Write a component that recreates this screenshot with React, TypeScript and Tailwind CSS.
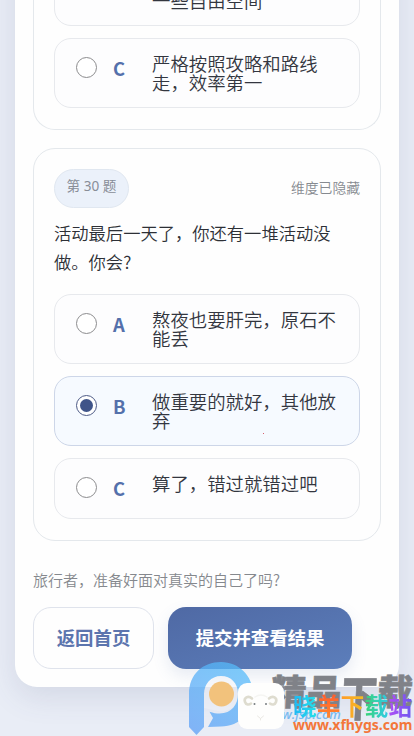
import React from 'react'
import clsx from 'clsx'

interface OptionProps {
  letter: string
  lines: string[]
  selected?: boolean
  short?: boolean
}

const Option: React.FC<OptionProps> = ({ letter, lines, selected, short }) => (
  <label
    className={clsx(
      'flex items-start rounded-[17px] border pl-[21px] pt-[16px]',
      short ? 'h-[61px]' : 'h-[70px]',
      selected ? 'border-[#cdd6e8] bg-[#f6faff]' : 'border-[#e7e9ed] bg-[#fdfdfe]'
    )}
  >
    <span
      className={clsx(
        'mt-[2px] flex size-[21px] shrink-0 items-center justify-center rounded-full border-[1.5px] bg-white',
        selected ? 'border-[#4d5a86]' : 'border-[#8c8c8e]'
      )}
    >
      {selected && <span className="size-[13px] rounded-full bg-[#3f5489]" />}
    </span>
    <span className="-mt-[1.5px] ml-[16px] w-[39px] shrink-0 text-[18.4px] font-bold leading-[28px] text-[#5470ab]">
      {letter}
    </span>
    <span className="-mt-px text-[18.4px] font-[350] leading-[18.5px] text-[#33363f]">
      {lines.map((line, i) => (
        <span key={i} className="block h-[18.5px] whitespace-nowrap">
          {line}
        </span>
      ))}
    </span>
  </label>
)

const SiteLogo = () => (
  <svg className="absolute left-[186px] top-[658px]" width="104" height="78" viewBox="0 0 104 78">
    <defs>
      <linearGradient id="logo-arch" x1="0" y1="1" x2="0.6" y2="0">
        <stop offset="0" stopColor="#5c9df6" />
        <stop offset="1" stopColor="#56bbfa" />
      </linearGradient>
    </defs>
    <path d="M18 50V36A17.5 17.5 0 1 1 31 53Z" fill="#f0f1f7" fillOpacity="0.5" />
    <path
      d="M3 69V36C3 16 17 4 35 4C53 4 67 18 67 36C67 55 54 68 35 68.5L22 69L27 60L23.5 53.7C42 60 52 49 52 36C52 25 45 18 35 18C25 18 18 26 18 36V69L10.5 77Z"
      fill="url(#logo-arch)"
      fillOpacity="0.74"
    />
    <circle cx="35.5" cy="36" r="12.5" fill="#f2c27c" />
  </svg>
)

const SheepIcon = () => (
  <svg className="absolute left-[238px] top-[683px]" width="46" height="46" viewBox="0 0 46 46">
    <rect width="46" height="46" rx="9" fill="#fefefd" />
    <g fill="none" strokeLinecap="round">
      <path d="M14 15.5C10 12 5.5 15 7 19C8 22 11 22 13 20.5" stroke="#dedccf" strokeWidth="2.6" />
      <path d="M31 15.5C35 12 39.5 15 38 19C37 22 34 22 32 20.5" stroke="#dedccf" strokeWidth="2.6" />
      <path d="M17 14Q23 10 29 14" stroke="#f5f5f2" strokeWidth="1.5" />
      <path d="M19.5 33L22.5 35.5L25.5 33M22.5 35.5V37" stroke="#eae8e3" strokeWidth="1" />
    </g>
    <circle cx="16.5" cy="21" r="1" fill="#777d80" />
    <circle cx="28" cy="21" r="1" fill="#777d80" />
  </svg>
)

const App: React.FC = () => (
  <div
    className="relative flex h-[736px] w-[414px] flex-col justify-end overflow-hidden bg-[#e9edf6] px-[15px] pb-[49px]"
    style={{ fontFamily: '"Noto Sans CJK SC", sans-serif' }}
  >
    <main className="shrink-0 rounded-b-[22px] bg-[#fefefe] px-[18px] pb-[18px] shadow-[0_10px_30px_rgba(70,80,120,0.13)]">
      <section className="rounded-b-[22px] border border-t-0 border-[#e4e8ec] bg-[#fefefe] px-5 pb-[21px]">
        <div className="flex flex-col gap-3">
          <Option letter="" lines={['', '一些自由空间']} />
          <Option letter="C" lines={['严格按照攻略和路线', '走，效率第一']} />
        </div>
      </section>

      <section className="mt-[18px] h-[393px] rounded-[22px] border border-[#e4e8ec] bg-[#fefefe] px-5 pt-5">
        <div className="flex h-[39px] justify-between">
          <span className="flex h-[39px] w-[75px] justify-center rounded-full border border-[#e0e7f0] bg-[#ebf1fa] pt-[6px] font-['Noto_Sans','Noto_Sans_CJK_SC',sans-serif] text-[13.6px] leading-[20px] text-[#888d97]">
            第 30 题
          </span>
          <span className="pt-[8px] text-[13.8px] font-[350] leading-[20px] text-[#868a90]">维度已隐藏</span>
        </div>
        <h2 className="mt-[10px] whitespace-nowrap text-[17.3px] font-[350] leading-[29px] text-[#2d3036]">
          活动最后一天了，你还有一堆活动没
          <br />
          做。你会?
        </h2>
        <div className="mt-[18px] flex flex-col gap-[12px]">
          <Option letter="A" lines={['熬夜也要肝完，原石不', '能丢']} />
          <Option letter="B" lines={['做重要的就好，其他放', '弃']} selected />
          <Option letter="C" lines={['算了，错过就错过吧']} short />
        </div>
      </section>

      <p className="mt-[28px] text-[15px] font-[350] leading-[22px] text-[#85888d]">
        旅行者，准备好面对真实的自己了吗?
      </p>
      <div className="mt-[16px] flex gap-[14px]">
        <button className="h-[62px] w-[121px] rounded-[18px] border border-[#dfe3ec] bg-[#fefefe] text-[18.4px] font-bold text-[#5c75ae]">
          返回首页
        </button>
        <button className="h-[62px] w-[184px] rounded-[18px] bg-linear-to-br from-[#4f69a4] to-[#5c7ebb] text-[18.4px] font-bold text-white shadow-[0_7px_16px_rgba(80,110,170,0.13)]">
          提交并查看结果
        </button>
      </div>
    </main>

    <span className="absolute left-[263px] top-[433px] size-px bg-[#d95f6d]" />

    <SiteLogo />
    <div className="absolute left-[271px] top-[668px] flex -skew-x-3 text-[35.5px] font-black leading-[44px] text-[#808288] [-webkit-text-stroke:0.6px_#808288]">
      <span>精</span>
      <span>品</span>
      <span className="origin-[50%_15%] scale-y-[1.35]">下</span>
      <span>载</span>
    </div>
    <span className="absolute left-[282px] top-[705px] font-['Open_Sans'] text-[13px] font-semibold italic leading-[18px] text-[#78baf0]">
      w.jsp.com
    </span>
    <SheepIcon />
    <div className="absolute left-[293px] top-[690px] flex text-[23.8px] font-bold leading-[30px]">
      <span className="bg-linear-to-r from-[#1fb6f4] to-[#27e0e8] bg-clip-text text-transparent">晓</span>
      <span className="bg-linear-to-b from-[#ff542f] to-[#ff8b2e] bg-clip-text text-transparent">羊</span>
      <span className="bg-linear-to-r from-[#ff9b27] to-[#f3bd21] bg-clip-text text-transparent">下</span>
      <span className="bg-linear-to-r from-[#3ed36b] to-[#31c9e6] bg-clip-text text-transparent">载</span>
      <span className="bg-linear-to-r from-[#b14cf5] to-[#6b57ef] bg-clip-text text-transparent">站</span>
    </div>
    <span className="absolute left-[293px] top-[716px] whitespace-nowrap font-['Noto_Sans'] text-[14px] font-bold leading-[18px] text-[#f3773a]">
      www.xfhygs.com
    </span>
  </div>
)

export default App
